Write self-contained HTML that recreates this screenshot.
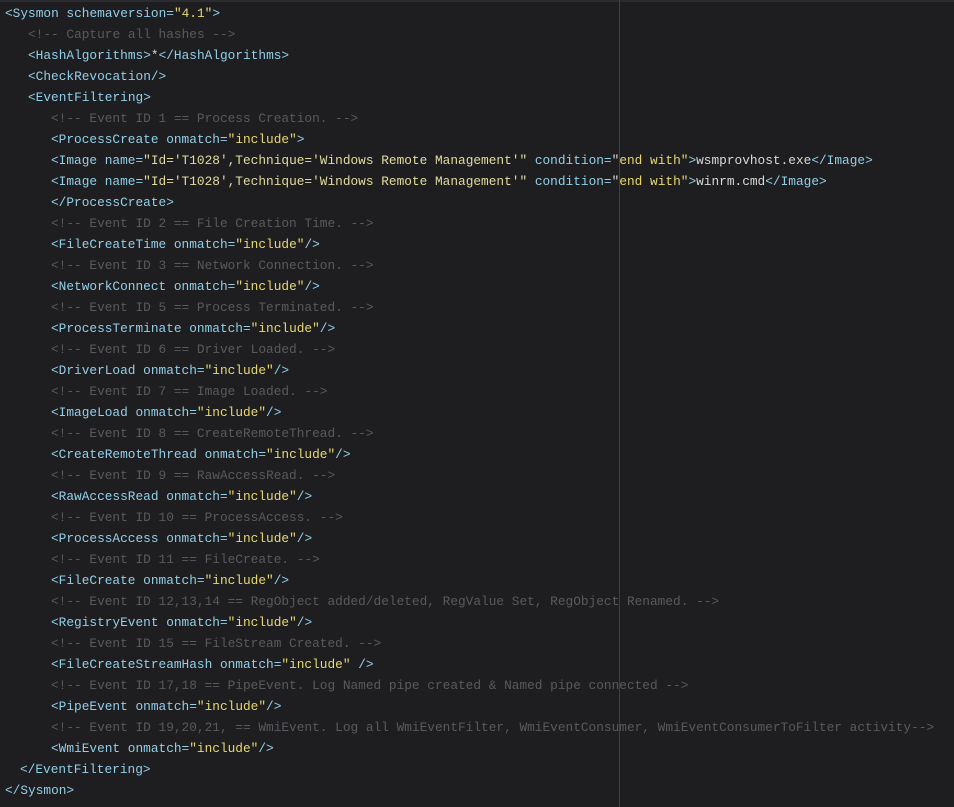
<!DOCTYPE html>
<html><head><meta charset="utf-8"><style>
html,body{margin:0;padding:0;background:#1e1e21;width:954px;height:807px;overflow:hidden}
.top{position:absolute;left:0;top:0;width:954px;height:2px;background:#2b2b30}
.rul{position:absolute;left:619px;top:0;width:1px;height:807px;background:#3f3f44}
.l{position:absolute;height:21px;line-height:21px;white-space:pre;font-family:"Liberation Mono",monospace;font-size:12.8px;color:#92cfe8}
.s{color:#e8d86e}.c{color:#5a5a5e}.w{color:#d8d8d8}.v{color:#e2dc9e}
</style></head><body>
<div class="top"></div><div class="rul"></div>
<div class="l" style="left:5px;top:3px">&lt;Sysmon schemaversion=<span class="s">"4.1"</span>&gt;</div>
<div class="l c" style="left:28px;top:24px">&lt;!-- Capture all hashes --&gt;</div>
<div class="l" style="left:28px;top:45px">&lt;HashAlgorithms&gt;<span class="w">*</span>&lt;/HashAlgorithms&gt;</div>
<div class="l" style="left:28px;top:66px">&lt;CheckRevocation/&gt;</div>
<div class="l" style="left:28px;top:87px">&lt;EventFiltering&gt;</div>
<div class="l c" style="left:51px;top:108px">&lt;!-- Event ID 1 == Process Creation. --&gt;</div>
<div class="l" style="left:51px;top:129px">&lt;ProcessCreate onmatch=<span class="s">"include"</span>&gt;</div>
<div class="l" style="left:51px;top:150px">&lt;Image name=<span class="v">"Id='T1028',Technique='Windows Remote Management'"</span> condition=<span class="w">"</span><span class="s">end with"</span>&gt;<span class="w">wsmprovhost.exe</span>&lt;/Image&gt;</div>
<div class="l" style="left:51px;top:171px">&lt;Image name=<span class="v">"Id='T1028',Technique='Windows Remote Management'"</span> condition=<span class="w">"</span><span class="s">end with"</span>&gt;<span class="w">winrm.cmd</span>&lt;/Image&gt;</div>
<div class="l" style="left:51px;top:192px">&lt;/ProcessCreate&gt;</div>
<div class="l c" style="left:51px;top:213px">&lt;!-- Event ID 2 == File Creation Time. --&gt;</div>
<div class="l" style="left:51px;top:234px">&lt;FileCreateTime onmatch=<span class="s">"include"</span>/&gt;</div>
<div class="l c" style="left:51px;top:255px">&lt;!-- Event ID 3 == Network Connection. --&gt;</div>
<div class="l" style="left:51px;top:276px">&lt;NetworkConnect onmatch=<span class="s">"include"</span>/&gt;</div>
<div class="l c" style="left:51px;top:297px">&lt;!-- Event ID 5 == Process Terminated. --&gt;</div>
<div class="l" style="left:51px;top:318px">&lt;ProcessTerminate onmatch=<span class="s">"include"</span>/&gt;</div>
<div class="l c" style="left:51px;top:339px">&lt;!-- Event ID 6 == Driver Loaded. --&gt;</div>
<div class="l" style="left:51px;top:360px">&lt;DriverLoad onmatch=<span class="s">"include"</span>/&gt;</div>
<div class="l c" style="left:51px;top:381px">&lt;!-- Event ID 7 == Image Loaded. --&gt;</div>
<div class="l" style="left:51px;top:402px">&lt;ImageLoad onmatch=<span class="s">"include"</span>/&gt;</div>
<div class="l c" style="left:51px;top:423px">&lt;!-- Event ID 8 == CreateRemoteThread. --&gt;</div>
<div class="l" style="left:51px;top:444px">&lt;CreateRemoteThread onmatch=<span class="s">"include"</span>/&gt;</div>
<div class="l c" style="left:51px;top:465px">&lt;!-- Event ID 9 == RawAccessRead. --&gt;</div>
<div class="l" style="left:51px;top:486px">&lt;RawAccessRead onmatch=<span class="s">"include"</span>/&gt;</div>
<div class="l c" style="left:51px;top:507px">&lt;!-- Event ID 10 == ProcessAccess. --&gt;</div>
<div class="l" style="left:51px;top:528px">&lt;ProcessAccess onmatch=<span class="s">"include"</span>/&gt;</div>
<div class="l c" style="left:51px;top:549px">&lt;!-- Event ID 11 == FileCreate. --&gt;</div>
<div class="l" style="left:51px;top:570px">&lt;FileCreate onmatch=<span class="s">"include"</span>/&gt;</div>
<div class="l c" style="left:51px;top:591px">&lt;!-- Event ID 12,13,14 == RegObject added/deleted, RegValue Set, RegObject Renamed. --&gt;</div>
<div class="l" style="left:51px;top:612px">&lt;RegistryEvent onmatch=<span class="s">"include"</span>/&gt;</div>
<div class="l c" style="left:51px;top:633px">&lt;!-- Event ID 15 == FileStream Created. --&gt;</div>
<div class="l" style="left:51px;top:654px">&lt;FileCreateStreamHash onmatch=<span class="s">"include"</span> /&gt;</div>
<div class="l c" style="left:51px;top:675px">&lt;!-- Event ID 17,18 == PipeEvent. Log Named pipe created &amp; Named pipe connected --&gt;</div>
<div class="l" style="left:51px;top:696px">&lt;PipeEvent onmatch=<span class="s">"include"</span>/&gt;</div>
<div class="l c" style="left:51px;top:717px">&lt;!-- Event ID 19,20,21, == WmiEvent. Log all WmiEventFilter, WmiEventConsumer, WmiEventConsumerToFilter activity--&gt;</div>
<div class="l" style="left:51px;top:738px">&lt;WmiEvent onmatch=<span class="s">"include"</span>/&gt;</div>
<div class="l" style="left:20px;top:759px">&lt;/EventFiltering&gt;</div>
<div class="l" style="left:5px;top:780px">&lt;/Sysmon&gt;</div>
</body></html>
